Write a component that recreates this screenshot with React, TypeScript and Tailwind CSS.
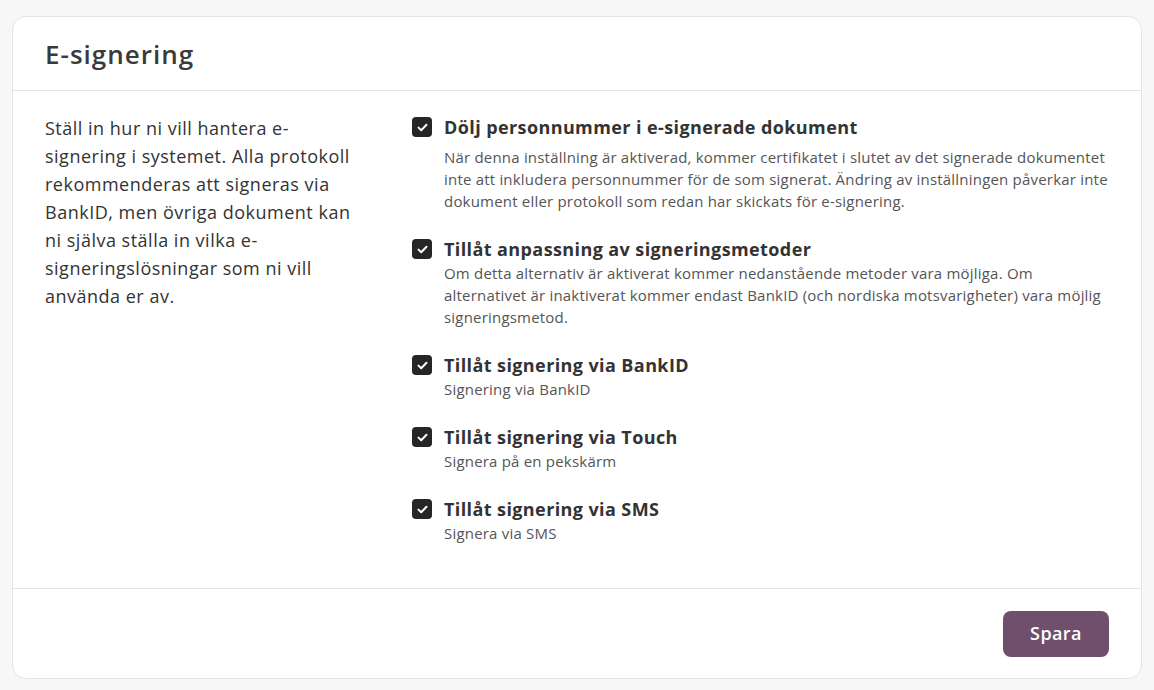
import React from "react";

const items: { title: string; lines: string[]; first?: boolean }[] = [
  {
    title: "Dölj personnummer i e-signerade dokument",
    lines: [
      "När denna inställning är aktiverad, kommer certifikatet i slutet av det signerade dokumentet",
      "inte att inkludera personnummer för de som signerat. Ändring av inställningen påverkar inte",
      "dokument eller protokoll som redan har skickats för e-signering.",
    ],
    first: true,
  },
  {
    title: "Tillåt anpassning av signeringsmetoder",
    lines: [
      "Om detta alternativ är aktiverat kommer nedanstående metoder vara möjliga. Om",
      "alternativet är inaktiverat kommer endast BankID (och nordiska motsvarigheter) vara möjlig",
      "signeringsmetod.",
    ],
  },
  { title: "Tillåt signering via BankID", lines: ["Signering via BankID"] },
  { title: "Tillåt signering via Touch", lines: ["Signera på en pekskärm"] },
  { title: "Tillåt signering via SMS", lines: ["Signera via SMS"] },
];

function Check() {
  return (
    <div className="w-5 h-5 rounded-[4px] bg-[#262626] flex items-center justify-center shrink-0 mt-[3px]">
      <svg width="11" height="9" viewBox="0 0 11 9" fill="none">
        <path d="M1.5 4.6 L4.2 7.2 L9.5 1.8" stroke="white" strokeWidth="2" strokeLinecap="round" strokeLinejoin="round" />
      </svg>
    </div>
  );
}

export default function App() {
  return (
    <div className="min-h-[690px] bg-[#f7f7f7] pt-4 px-3 pb-3 font-['Open_Sans',sans-serif] text-[#333]">
      <div className="bg-white border border-[#e4e4e4] rounded-[14px] flex flex-col">
        <div className="h-[74px] border-b border-[#e4e4e4] flex items-center px-8">
          <h1 className="text-[26px] tracking-[1px] font-semibold text-[#3a3a3a] leading-none">E-signering</h1>
        </div>
        <div className="flex px-8 pt-[23px] pb-[44px]">
          <p className="w-[318px] text-[18px] tracking-[0.5px] leading-[28px] text-[#333]">
            Ställ in hur ni vill hantera e-signering i systemet. Alla protokoll rekommenderas att signeras via BankID, men övriga dokument kan ni själva ställa in vilka e-signeringslösningar som ni vill använda er av.
          </p>
          <div className="ml-[49px] flex-1 flex flex-col gap-[24px]">
            {items.map((it) => (
              <div key={it.title} className="flex gap-3">
                <Check />
                <div className="flex-1">
                  <div className={`text-[18px] tracking-[0.4px] font-bold leading-[26px] text-[#333] ${it.first ? "mb-[6px]" : ""}`}>{it.title}</div>
                  <div className="text-[15px] tracking-[0.2px] leading-[22px] text-[#555] whitespace-nowrap">
                    {it.lines.map((l, i) => (
                      <div key={i}>{l}</div>
                    ))}
                  </div>
                </div>
              </div>
            ))}
          </div>
        </div>
        <div className="border-t border-[#e4e4e4] h-[90px] flex items-center justify-end px-8">
          <button className="w-[106px] h-[46px] rounded-[8px] bg-[#6f4f6b] text-white text-[18px] tracking-[0.4px] font-semibold">Spara</button>
        </div>
      </div>
    </div>
  );
}
